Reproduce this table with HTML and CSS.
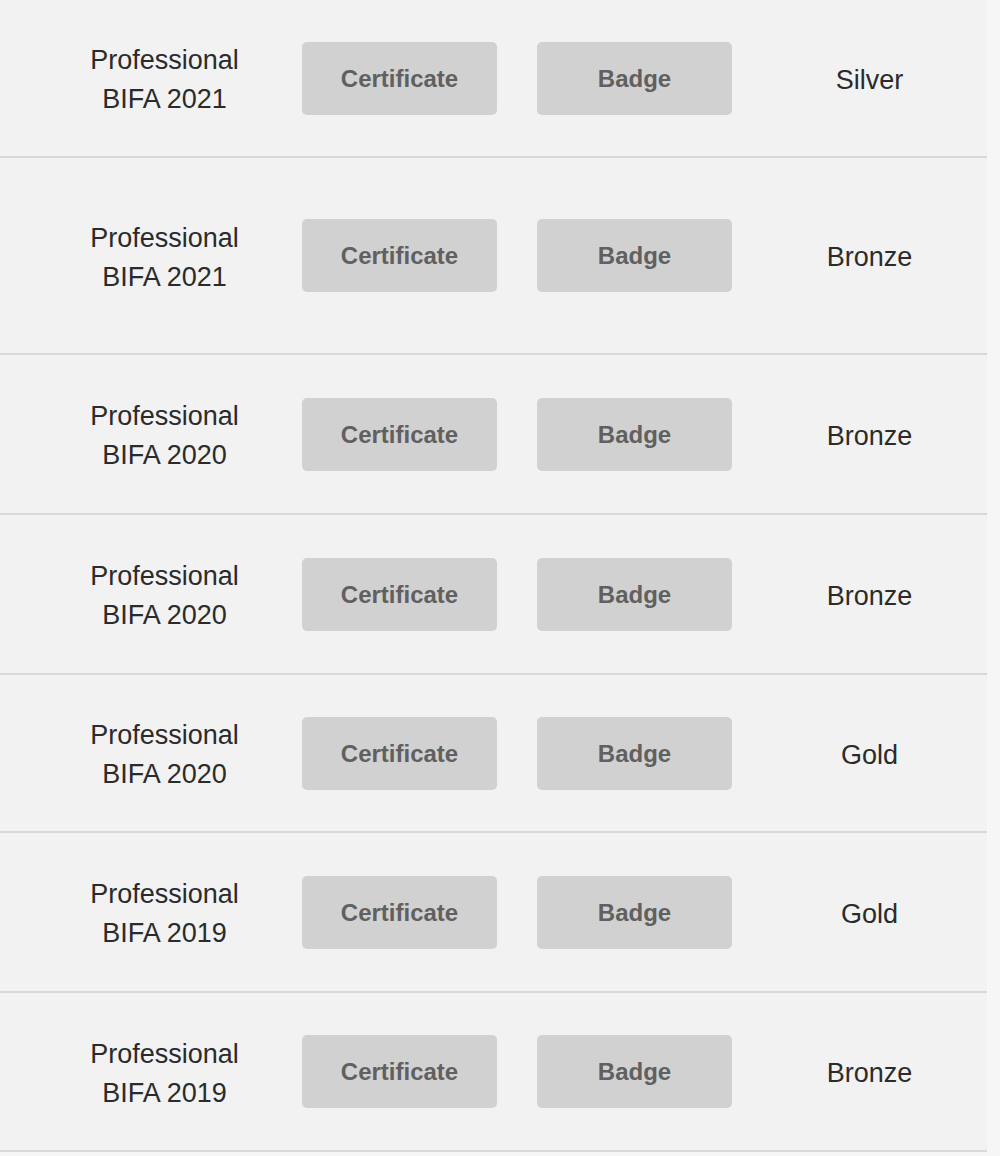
FILE: index.html
```html
<!DOCTYPE html>
<html>
<head>
<meta charset="utf-8">
<link rel="stylesheet" href="styles.css">
</head>
<body>
<div class="table">
  <div class="row row-a">
    <div class="cell name">Professional<br>BIFA 2021</div>
    <div class="cell"><span class="btn">Certificate</span></div>
    <div class="cell"><span class="btn">Badge</span></div>
    <div class="cell level">Silver</div>
  </div>
  <div class="row row-b">
    <div class="cell name">Professional<br>BIFA 2021</div>
    <div class="cell"><span class="btn">Certificate</span></div>
    <div class="cell"><span class="btn">Badge</span></div>
    <div class="cell level">Bronze</div>
  </div>
  <div class="row row-c">
    <div class="cell name">Professional<br>BIFA 2020</div>
    <div class="cell"><span class="btn">Certificate</span></div>
    <div class="cell"><span class="btn">Badge</span></div>
    <div class="cell level">Bronze</div>
  </div>
  <div class="row row-c">
    <div class="cell name">Professional<br>BIFA 2020</div>
    <div class="cell"><span class="btn">Certificate</span></div>
    <div class="cell"><span class="btn">Badge</span></div>
    <div class="cell level">Bronze</div>
  </div>
  <div class="row row-d">
    <div class="cell name">Professional<br>BIFA 2020</div>
    <div class="cell"><span class="btn">Certificate</span></div>
    <div class="cell"><span class="btn">Badge</span></div>
    <div class="cell level">Gold</div>
  </div>
  <div class="row row-c">
    <div class="cell name">Professional<br>BIFA 2019</div>
    <div class="cell"><span class="btn">Certificate</span></div>
    <div class="cell"><span class="btn">Badge</span></div>
    <div class="cell level">Gold</div>
  </div>
  <div class="row row-e">
    <div class="cell name">Professional<br>BIFA 2019</div>
    <div class="cell"><span class="btn">Certificate</span></div>
    <div class="cell"><span class="btn">Badge</span></div>
    <div class="cell level">Bronze</div>
  </div>
</div>
</body>
</html>
```

FILE: styles.css
```css
html, body {
  margin: 0;
  padding: 0;
  background: #f6f6f6;
}

body {
  font-family: "Liberation Sans", Arial, sans-serif;
  color: #2b2b2b;
}

.table {
  width: 987px;
  background: #f2f2f2;
}

.row {
  display: grid;
  grid-template-columns: repeat(4, 235px);
  padding-left: 47px;
  border-bottom: 2px solid #d9d9d9;
  align-items: center;
}

.row-a { height: 156px; }
.row-b { height: 195px; }
.row-c { height: 158px; }
.row-d { height: 156px; }
.row-e { height: 157px; }

.cell {
  display: flex;
  justify-content: center;
  align-items: center;
  text-align: center;
  font-size: 27px;
  line-height: 39px;
}

.name,
.level {
  padding-top: 4px;
}

.btn {
  display: flex;
  align-items: center;
  justify-content: center;
  width: 195px;
  height: 73px;
  background: #d1d1d1;
  border-radius: 5px;
  color: #606060;
  font-weight: bold;
  font-size: 24px;
}
```
